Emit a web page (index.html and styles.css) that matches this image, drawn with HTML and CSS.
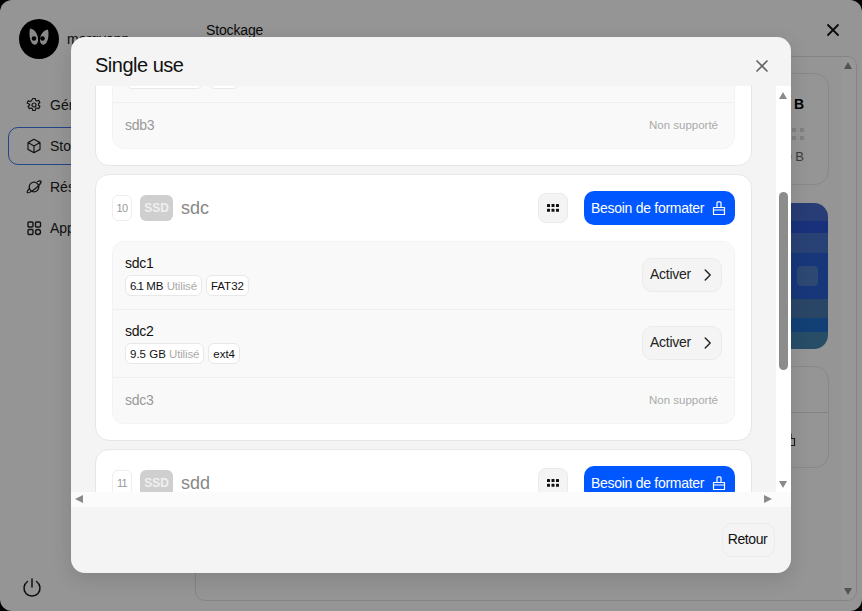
FILE: index.html
```html
<!DOCTYPE html>
<html lang="fr">
<head>
<meta charset="utf-8">
<title>Stockage</title>
<link rel="stylesheet" href="styles.css">
</head>
<body>
<svg class="sprites" width="0" height="0" aria-hidden="true">
  <symbol id="brush" viewBox="0 0 14 14"><path d="M5 6.500V1.800C5 1.300 5.400 .8 6 .8h2c.6 0 1 .5 1 1v4.700M1.500 6.500h11v7h-11zM1.500 9h11" fill="none" stroke="currentColor" stroke-width="1.200" stroke-linejoin="round"/></symbol>
  <symbol id="dots" viewBox="0 0 12 8"><g fill="currentColor"><rect width="3" height="3" rx=".6"/><rect x="4.500" width="3" height="3" rx=".6"/><rect x="9" width="3" height="3" rx=".6"/><rect y="4.800" width="3" height="3" rx=".6"/><rect x="4.500" y="4.800" width="3" height="3" rx=".6"/><rect x="9" y="4.800" width="3" height="3" rx=".6"/></g></symbol>
  <symbol id="chev" viewBox="0 0 8 12"><path d="M1.200 1l5 5-5 5" fill="none" stroke="currentColor" stroke-width="1.400" stroke-linecap="round" stroke-linejoin="round"/></symbol>
</svg>

<div class="app">
  <aside class="side">
    <div class="user">
      <svg class="avatar" viewBox="0 0 40 40"><circle cx="20" cy="20" r="20" fill="#000"/><path d="M11 9.500C16 10 19.500 16 19 22c-.5 4-4.500 5-6.500 1.500S10 14 11 9.500z" fill="#e4e4e4"/><path d="M29 10.500C24 11 20.500 16.500 21 22c.5 4 4.500 5 6.500 1.500S30 15 29 10.500z" fill="#e4e4e4"/><circle cx="15" cy="19.500" r="2.300" fill="#000"/><circle cx="23.500" cy="19.500" r="2.300" fill="#000"/></svg>
      <span class="user-name">morgyann</span>
    </div>
    <nav class="nav">
      <a class="nav-item"><svg viewBox="0 0 16 16" class="nav-ico"><path d="M6.800 1.500h2.400l.4 1.800 1.300.7 1.800-.6 1.200 2.100-1.400 1.300v1.400l1.400 1.300-1.200 2.100-1.800-.6-1.300.7-.4 1.800H6.800l-.4-1.800-1.300-.7-1.800.6-1.200-2.100 1.400-1.300V7.300L1.100 6l1.200-2.100 1.800.6 1.300-.7z" fill="none" stroke="currentColor" stroke-width="1.200" stroke-linejoin="round"/><circle cx="8" cy="8" r="2" fill="none" stroke="currentColor" stroke-width="1.200"/></svg>Général</a>
      <a class="nav-item is-active"><svg viewBox="0 0 16 16" class="nav-ico"><path d="M8 1.300l6 3.300v6.800l-6 3.300-6-3.300V4.600zM2 4.600l6 3.400 6-3.400M8 8v6.700" fill="none" stroke="currentColor" stroke-width="1.200" stroke-linejoin="round"/></svg>Stockage</a>
      <a class="nav-item"><svg viewBox="0 0 16 16" class="nav-ico"><circle cx="8" cy="8" r="4.800" fill="none" stroke="currentColor" stroke-width="1.300"/><path d="M11.500 2.500c2-.8 3.300-.9 3.500-.3.400 1.200-2.300 4.800-5.800 7.500C5.700 12.400 2 14.300 1.300 13.400c-.4-.5.300-1.800 1.700-3.400" fill="none" stroke="currentColor" stroke-width="1.300" stroke-linecap="round"/></svg>Réseau</a>
      <a class="nav-item"><svg viewBox="0 0 16 16" class="nav-ico"><g fill="none" stroke="currentColor" stroke-width="1.400"><rect x="2" y="2" width="5" height="5" rx="1"/><rect x="9.500" y="2" width="5" height="5" rx="1"/><rect x="2" y="9.500" width="5" height="5" rx="1"/><rect x="9.500" y="9.500" width="5" height="5" rx="2.500"/></g></svg>Applications</a>
    </nav>
    <svg class="power" viewBox="0 0 20 20"><path d="M10 2v8M5.500 4.500a8 8 0 1 0 9 0" fill="none" stroke="currentColor" stroke-width="1.500" stroke-linecap="round"/></svg>
  </aside>
  <main class="main">
    <header class="main-head">
      <span>Stockage</span>
      <svg class="main-close" viewBox="0 0 14 14"><path d="M2 2l10 10M12 2L2 12" stroke="currentColor" stroke-width="1.800" stroke-linecap="round"/></svg>
    </header>
    <section class="panel">
      <div class="panel-body">
        <div class="bg-card bg-disk">
          <b class="bg-size">0 B</b>
          <svg class="bg-dots" viewBox="0 0 12 12"><g fill="#d5d5d5"><rect width="4" height="4"/><rect x="8" width="4" height="4"/><rect y="8" width="4" height="4"/><rect x="8" y="8" width="4" height="4"/></g></svg>
          <span class="bg-free">0 B</span>
        </div>
        <div class="bg-blue"><span class="bg-square"></span></div>
        <div class="bg-card bg-list">
          <div class="bg-row"></div>
          <div class="bg-row bg-row-ico"><svg class="bg-ico" viewBox="0 0 14 14"><path d="M5 5.500V1h4v4.500M1.500 5.500h11v7h-11z" fill="none" stroke="#333" stroke-width="1.200"/></svg></div>
        </div>
      </div>
      <div class="panel-bar"><i class="arr arr-up dim"></i><i class="arr arr-down dim"></i></div>
    </section>
  </main>
</div>

<div class="overlay"></div>

<div class="modal" role="dialog">
  <header class="modal-head">
    <h1 class="modal-title">Single use</h1>
    <svg class="modal-close" viewBox="0 0 14 14"><path d="M2 2l10 10M12 2L2 12" stroke="currentColor" stroke-width="1.700" stroke-linecap="round"/></svg>
  </header>
  <div class="scroll">
    <div class="scroll-main">
      <div class="scroll-view">
        <div class="list">
          <article class="card">
            <div class="card-head">
              <span class="num">9</span><span class="ssd">SSD</span><span class="dev">sdb</span>
              <button class="grid-btn"><svg class="dots"><use href="#dots"/></svg></button>
              <button class="fmt-btn">Besoin de formater<svg class="brush"><use href="#brush"/></svg></button>
            </div>
            <div class="rows">
              <div class="row"><div class="row-info"><div class="row-name">sdb1</div><div class="tags"><span class="tag"><span><span class="kern">6.1</span> MB <em>Utilisé</em></span></span><span class="tag">FAT32</span></div></div><button class="act-btn">Activer<svg class="chev"><use href="#chev"/></svg></button></div>
              <div class="row"><div class="row-info"><div class="row-name">sdb2</div><div class="tags tags-b"><span class="tag tag-w1"><span>9.5 GB <em>Utilisé</em></span></span><span class="tag tag-w2">x</span></div></div><button class="act-btn">Activer<svg class="chev"><use href="#chev"/></svg></button></div>
              <div class="row row-off"><span class="off-name">sdb3</span><span class="off-note">Non supporté</span></div>
            </div>
          </article>
          <article class="card">
            <div class="card-head">
              <span class="num">10</span><span class="ssd">SSD</span><span class="dev">sdc</span>
              <button class="grid-btn"><svg class="dots"><use href="#dots"/></svg></button>
              <button class="fmt-btn">Besoin de formater<svg class="brush"><use href="#brush"/></svg></button>
            </div>
            <div class="rows">
              <div class="row"><div class="row-info"><div class="row-name">sdc1</div><div class="tags"><span class="tag"><span><span class="kern">6.1</span> MB <em>Utilisé</em></span></span><span class="tag">FAT32</span></div></div><button class="act-btn">Activer<svg class="chev"><use href="#chev"/></svg></button></div>
              <div class="row"><div class="row-info"><div class="row-name">sdc2</div><div class="tags"><span class="tag"><span>9.5 GB <em>Utilisé</em></span></span><span class="tag">ext4</span></div></div><button class="act-btn">Activer<svg class="chev"><use href="#chev"/></svg></button></div>
              <div class="row row-off"><span class="off-name">sdc3</span><span class="off-note">Non supporté</span></div>
            </div>
          </article>
          <article class="card">
            <div class="card-head">
              <span class="num">11</span><span class="ssd">SSD</span><span class="dev">sdd</span>
              <button class="grid-btn"><svg class="dots"><use href="#dots"/></svg></button>
              <button class="fmt-btn">Besoin de formater<svg class="brush"><use href="#brush"/></svg></button>
            </div>
          </article>
        </div>
      </div>
      <div class="vbar"><i class="arr arr-up"></i><span class="thumb"></span><i class="arr arr-down"></i></div>
    </div>
    <div class="hbar"><i class="arr arr-left"></i><i class="arr arr-right"></i></div>
  </div>
  <footer class="modal-foot"><button class="back-btn">Retour</button></footer>
</div>
</body>
</html>
```

FILE: styles.css
```css
* { box-sizing: border-box; }
html, body { height: 100%; }
body { margin: 0; background: #000; font-family: "Liberation Sans", Arial, sans-serif; color: #111; overflow: hidden; }
.sprites { position: absolute; }
button { font: inherit; padding: 0; cursor: pointer; }

/* background application */
.app { height: 611px; display: flex; background: #f8f8f8; border-radius: 12px; overflow: hidden; }
.side { width: 195px; flex: none; padding: 19px 8px 14px; display: flex; flex-direction: column; }
.user { display: flex; align-items: center; gap: 8px; padding-left: 11px; font-size: 14px; }
.avatar { width: 40px; height: 40px; }
.nav { margin-top: 27px; display: flex; flex-direction: column; gap: 3px; }
.nav-item { height: 38px; display: flex; align-items: center; gap: 8px; padding-left: 17px; font-size: 14px; border: 1px solid transparent; border-radius: 10px; color: #222; }
.nav-item.is-active { border-color: #3b73e6; }
.nav-ico { width: 16px; height: 16px; }
.power { width: 20px; height: 20px; margin: auto 0 0 14px; color: #1a1a1a; }
.main { flex: 1; display: flex; flex-direction: column; padding: 0 5px 10px 0; }
.main-head { height: 56px; flex: none; display: flex; align-items: center; justify-content: space-between; padding: 4px 17px 0 11px; font-size: 14px; letter-spacing: -.01em; }
.main-close { width: 14px; height: 14px; }
.panel { flex: 1; display: flex; border: 1px solid #ddd; border-radius: 10px; overflow: hidden; }
.panel-body { flex: 1; padding: 16px 12px 0 14px; display: flex; flex-direction: column; }
.panel-bar { width: 15px; flex: none; background: #fcfcfc; position: relative; }
.bg-card { border: 1px solid #e3e3e3; border-radius: 14px; }
.bg-disk { height: 112px; display: flex; flex-direction: column; align-items: flex-end; padding: 22px 24px 0 0; font-size: 14px; }
.bg-size { color: #000; }
.bg-dots { width: 12px; height: 12px; margin-top: 16px; }
.bg-free { margin-top: 9px; color: #666; font-size: 13px; }
.bg-blue { height: 146px; margin: 18px 1px 17px 0; border-radius: 14px; display: flex; align-items: center; justify-content: flex-end; padding-right: 10px;
  background: linear-gradient(#4364c4 0 18px, #2852cc 18px 30px, #456ec4 30px 50px, #285ccc 50px 96px, #4676ac 96px 115px, #1f6cc4 115px 129px, #4280ac 129px); }
.bg-square { width: 21px; height: 20px; border-radius: 4px; background: #4a78c0; }
.bg-list { height: 102px; }
.bg-row { height: 46px; border-bottom: 1px solid #ddd; }
.bg-row-ico { height: 54px; border: 0; display: flex; align-items: center; justify-content: flex-end; padding-right: 32px; }
.bg-ico { width: 14px; height: 14px; }

.overlay { position: absolute; inset: 0; background: rgba(0, 0, 0, .4); }

/* arrows */
.arr { position: absolute; width: 0; height: 0; display: block; border-style: solid; border-color: transparent; }
.arr-up { top: 6px; left: 3px; border-width: 0 4.500px 7px; border-bottom-color: #8a8a8a; }
.arr-down { bottom: 4px; left: 3px; border-width: 7px 4.500px 0; border-top-color: #8a8a8a; }
.arr-left { left: 4px; top: 3px; border-width: 4.500px 8px 4.500px 0; border-right-color: #8a8a8a; }
.arr-right { right: 19px; top: 3px; border-width: 4.500px 0 4.500px 8px; border-left-color: #8a8a8a; }
.arr-up.dim { top: 5px; }
.arr-down.dim { bottom: 5px; }

/* modal */
.modal { position: absolute; left: 71px; top: 37px; width: 720px; height: 536px; background: #f4f4f4; border-radius: 14px; overflow: hidden; display: flex; flex-direction: column; box-shadow: 0 6px 20px rgba(0, 0, 0, .12); }
.modal-head { height: 49px; flex: none; display: flex; align-items: center; justify-content: space-between; padding: 8px 22px 0 24px; }
.modal-title { margin: 0; font-size: 20px; font-weight: 400; color: #111; letter-spacing: -.025em; }
.modal-close { width: 14px; height: 14px; color: #666; }
.scroll { height: 421px; flex: none; display: flex; flex-direction: column; }
.scroll-main { flex: 1; min-height: 0; display: flex; }
.scroll-view { flex: 1; min-width: 0; overflow: hidden; padding: 0 24px; }
.list { margin-top: -187px; display: flex; flex-direction: column; gap: 8px; }
.vbar { width: 15px; flex: none; background: #fff; position: relative; }
.thumb { position: absolute; left: 3px; top: 106px; width: 9px; height: 178px; border-radius: 5px; background: #8c8c8c; }
.hbar { height: 15px; flex: none; background: #fbfbfb; position: relative; }
.modal-foot { flex: 1; display: flex; justify-content: flex-end; align-items: flex-start; padding: 16px 16px 0 0; }
.back-btn { width: 53px; height: 34px; padding: 0 2px 2px 0; border: 1px solid #ebebeb; border-radius: 10px; background: #f4f4f4; font-size: 14px; color: #111; letter-spacing: -.03em; }

/* cards */
.card { background: #fff; border: 1px solid #e6e6e6; border-radius: 14px; padding: 16px; }
.card-head { height: 34px; display: flex; align-items: center; }
.num { width: 20px; height: 26px; display: flex; align-items: center; justify-content: center; border: 1px solid #eee; border-radius: 6px; font-size: 11px; letter-spacing: -.06em; color: #999; background: #fff; }
.ssd { width: 33px; height: 26px; margin-left: 8px; display: flex; align-items: center; justify-content: center; border-radius: 6px; background: #cfcfcf; color: #efefef; font-size: 12px; font-weight: 700; }
.dev { margin-left: 8px; font-size: 18px; color: #888; }
.grid-btn { margin-left: auto; width: 30px; height: 30px; display: flex; align-items: center; justify-content: center; background: #f4f4f4; border: 1px solid #eaeaea; border-radius: 8px; color: #111; }
.dots { width: 12px; height: 8px; }
.fmt-btn { margin-left: 16px; width: 151px; height: 34px; display: flex; align-items: center; justify-content: space-between; padding: 0 9px 0 7px; background: #0057ff; border: 0; border-radius: 10px; color: #fff; font-size: 14px; letter-spacing: -.02em; }
.brush { width: 14px; height: 14px; }
.rows { margin-top: 16px; background: #f9f9f9; border: 1px solid #f3f3f3; border-radius: 12px; }
.row { height: 68px; display: flex; align-items: center; justify-content: space-between; padding: 0 12px; border-bottom: 1px solid #efefef; }
.row-name { font-size: 14px; line-height: 16px; color: #111; letter-spacing: -.02em; }
.tags { display: flex; gap: 4px; margin-top: 4px; }
.tag { height: 21px; display: flex; align-items: center; padding: 0 4px; background: #fff; border: 1px solid #e8e8e8; border-radius: 6px; font-size: 11.500px; color: #111; white-space: pre; }
.tag em { font-style: normal; color: #aaa; letter-spacing: -.15px; }
.kern { letter-spacing: -1px; }
.tags-b { gap: 6px; }
.tag-w1 { width: 77px; margin-left: 1px; }
.tag-w2 { width: 30px; }
.act-btn { width: 80px; height: 34px; margin-top: -1px; display: flex; align-items: center; justify-content: space-between; padding: 0 9px 2px 7px; background: #f4f4f4; border: 1px solid #ebebeb; border-radius: 10px; font-size: 14px; color: #222; letter-spacing: -.02em; }
.chev { width: 8px; height: 12px; margin-top: 2px; }
.row-off { height: 45px; border-bottom: 0; padding-bottom: 2px; }
.off-name { font-size: 14px; color: #999; letter-spacing: -.02em; }
.off-note { font-size: 11.500px; color: #aaa; padding-right: 4px; }
```
